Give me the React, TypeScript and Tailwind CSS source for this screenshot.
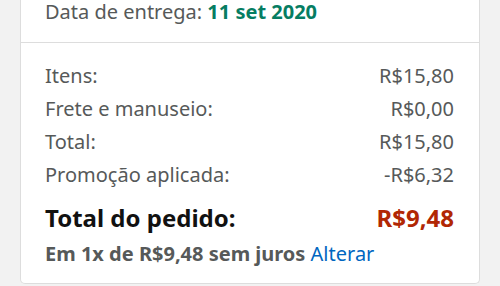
import React from 'react';

const rows = [
  { label: 'Itens:', value: 'R$15,80' },
  { label: 'Frete e manuseio:', value: 'R$0,00' },
  { label: 'Total:', value: 'R$15,80' },
  { label: 'Promoção aplicada:', value: '-R$6,32' },
];

const App = () => {
  return (
    <div className="w-[500px] h-[286px] overflow-hidden bg-[#f2f2f2] px-[20px] font-['Noto_Sans',sans-serif]">
      <div className="bg-white border-x border-b border-[#dddddd] rounded-b-[5px]">
        {/* Delivery date */}
        <div className="h-[43px] px-[24px] pt-[1px] border-b border-[#dddddd] text-[20px] leading-[22px] text-[#565959]">
          Data de entrega: <span className="font-bold text-[#067d62]">11 set 2020</span>
        </div>

        {/* Summary */}
        <div className="pl-[24px] pr-[25px] pt-[16px] pb-[14px]">
          {rows.map((row) => (
            <div
              key={row.label}
              className="flex justify-between text-[20px] leading-[33px] text-[#565959]"
            >
              <span>{row.label}</span>
              <span>{row.value}</span>
            </div>
          ))}

          <div className="flex justify-between mt-[11px] text-[24px] leading-[32px] font-bold">
            <span className="text-[#111111]">Total do pedido:</span>
            <span className="text-[#b12704]">R$9,48</span>
          </div>
          <div className="mt-[5px] text-[20px] leading-[30px] font-bold text-[#565959]">
            Em 1x de R$9,48 sem juros{' '}
            <span className="font-normal text-[#0066c0]">Alterar</span>
          </div>
        </div>
      </div>
    </div>
  );
};

export default App;
